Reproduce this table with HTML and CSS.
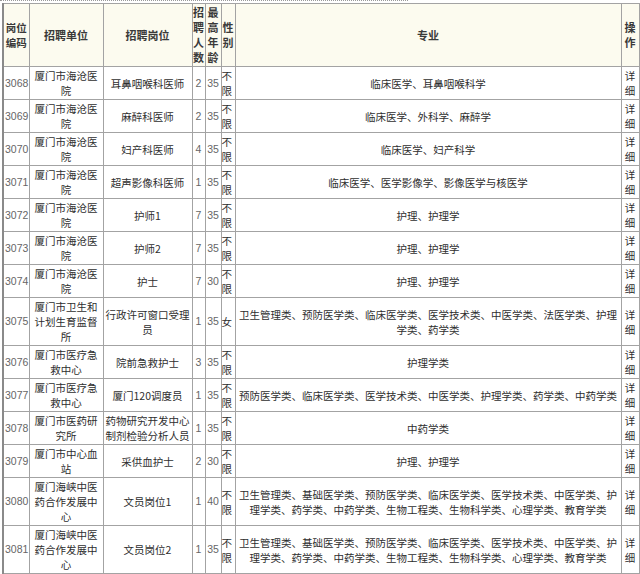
FILE: index.html
```html
<!DOCTYPE html>
<html lang="zh-CN">
<head>
<meta charset="utf-8">
<title>招聘岗位</title>
<link rel="stylesheet" href="styles.css">
</head>
<body>
<div class="dots"></div>
<table class="jobs">
<colgroup>
<col class="c-code"><col class="c-unit"><col class="c-post"><col class="c-num"><col class="c-age"><col class="c-sex"><col class="c-major"><col class="c-op">
</colgroup>
<thead>
<tr>
<th class="h-code">岗位编码</th><th>招聘单位</th><th>招聘岗位</th><th>招聘人数</th><th>最高年龄</th><th>性别</th><th>专业</th><th>操作</th>
</tr>
</thead>
<tbody>
<tr><td class="num code">3068</td><td>厦门市海沧医院</td><td>耳鼻咽喉科医师</td><td class="num">2</td><td class="num">35</td><td class="sex">不限</td><td class="major">临床医学、耳鼻咽喉科学</td><td class="op">详细</td></tr>
<tr><td class="num code">3069</td><td>厦门市海沧医院</td><td>麻醉科医师</td><td class="num">2</td><td class="num">35</td><td class="sex">不限</td><td class="major">临床医学、外科学、麻醉学</td><td class="op">详细</td></tr>
<tr><td class="num code">3070</td><td>厦门市海沧医院</td><td>妇产科医师</td><td class="num">4</td><td class="num">35</td><td class="sex">不限</td><td class="major">临床医学、妇产科学</td><td class="op">详细</td></tr>
<tr><td class="num code">3071</td><td>厦门市海沧医院</td><td>超声影像科医师</td><td class="num">1</td><td class="num">35</td><td class="sex">不限</td><td class="major">临床医学、医学影像学、影像医学与核医学</td><td class="op">详细</td></tr>
<tr><td class="num code">3072</td><td>厦门市海沧医院</td><td>护师1</td><td class="num">7</td><td class="num">35</td><td class="sex">不限</td><td class="major">护理、护理学</td><td class="op">详细</td></tr>
<tr><td class="num code">3073</td><td>厦门市海沧医院</td><td>护师2</td><td class="num">7</td><td class="num">35</td><td class="sex">不限</td><td class="major">护理、护理学</td><td class="op">详细</td></tr>
<tr><td class="num code">3074</td><td>厦门市海沧医院</td><td>护士</td><td class="num">7</td><td class="num">30</td><td class="sex">不限</td><td class="major">护理、护理学</td><td class="op">详细</td></tr>
<tr><td class="num code">3075</td><td>厦门市卫生和计划生育监督所</td><td>行政许可窗口受理员</td><td class="num">1</td><td class="num">35</td><td class="sex">女</td><td class="major">卫生管理类、预防医学类、临床医学类、医学技术类、中医学类、法医学类、护理学类、药学类</td><td class="op">详细</td></tr>
<tr><td class="num code">3076</td><td>厦门市医疗急救中心</td><td>院前急救护士</td><td class="num">3</td><td class="num">35</td><td class="sex">不限</td><td class="major">护理学类</td><td class="op">详细</td></tr>
<tr><td class="num code">3077</td><td>厦门市医疗急救中心</td><td>厦门120调度员</td><td class="num">1</td><td class="num">35</td><td class="sex">不限</td><td class="major">预防医学类、临床医学类、医学技术类、中医学类、护理学类、药学类、中药学类</td><td class="op">详细</td></tr>
<tr><td class="num code">3078</td><td>厦门市医药研究所</td><td>药物研究开发中心制剂检验分析人员</td><td class="num">1</td><td class="num">35</td><td class="sex">不限</td><td class="major">中药学类</td><td class="op">详细</td></tr>
<tr><td class="num code">3079</td><td>厦门市中心血站</td><td>采供血护士</td><td class="num">2</td><td class="num">30</td><td class="sex">不限</td><td class="major">护理、护理学</td><td class="op">详细</td></tr>
<tr><td class="num code">3080</td><td>厦门海峡中医药合作发展中心</td><td>文员岗位1</td><td class="num">1</td><td class="num">40</td><td class="sex">不限</td><td class="major">卫生管理类、基础医学类、预防医学类、临床医学类、医学技术类、中医学类、护理学类、药学类、中药学类、生物工程类、生物科学类、心理学类、教育学类</td><td class="op">详细</td></tr>
<tr><td class="num code">3081</td><td>厦门海峡中医药合作发展中心</td><td>文员岗位2</td><td class="num">1</td><td class="num">35</td><td class="sex">不限</td><td class="major">卫生管理类、基础医学类、预防医学类、临床医学类、医学技术类、中医学类、护理学类、药学类、中药学类、生物工程类、生物科学类、心理学类、教育学类</td><td class="op">详细</td></tr>
<tr class="blank"><td></td><td></td><td></td><td></td><td></td><td></td><td></td><td></td></tr>
</tbody>
</table>
</body>
</html>
```
FILE: styles.css
```css
html, body {
  margin: 0;
  padding: 0;
  background: #ffffff;
  overflow: hidden;
}
body {
  font-family: "Noto Sans CJK SC", "Liberation Sans", sans-serif;
  color: #2e2e2e;
}
.dots {
  width: 408px;
  height: 2px;
  border-top: 1px dotted #9a9a9a;
}
.jobs {
  margin-left: 2px;
  border-collapse: collapse;
  table-layout: fixed;
  width: 636px;
  font-size: 10.5px;
  line-height: 15px;
}
.c-code { width: 26px; }
.c-unit { width: 74px; }
.c-post { width: 89px; }
.c-num { width: 13px; }
.c-age { width: 16px; }
.c-sex { width: 14px; }
.c-major { width: 386px; }
.c-op { width: 18px; }
.jobs th, .jobs td {
  border: 1px solid #a3a3a3;
  padding: 1px 2px;
  text-align: center;
  vertical-align: middle;
  word-break: break-all;
}
.jobs th {
  background: #fcfbef;
  font-size: 11px;
  font-weight: bold;
  color: #3a3a3a;
  padding: 1px 0;
}
.jobs th.h-code {
  font-size: 10.5px;
  letter-spacing: 0;
}
.jobs tr > :first-child {
  border-left: 2px solid #8a8a8a;
}
.jobs td.num {
  font-family: "Liberation Sans", Arial, sans-serif;
  color: #666666;
  padding: 1px 0;
  font-size: 10.5px;
}
.jobs td.code {
  text-align: left;
  padding-left: 1px;
}
.jobs td.sex {
  padding: 1px 0;
  text-align: left;
}
.jobs td.op {
  padding: 1px 0;
}
.jobs td.major {
  padding: 1px 2px;
}
.blank td {
  height: 20px;
}
```
